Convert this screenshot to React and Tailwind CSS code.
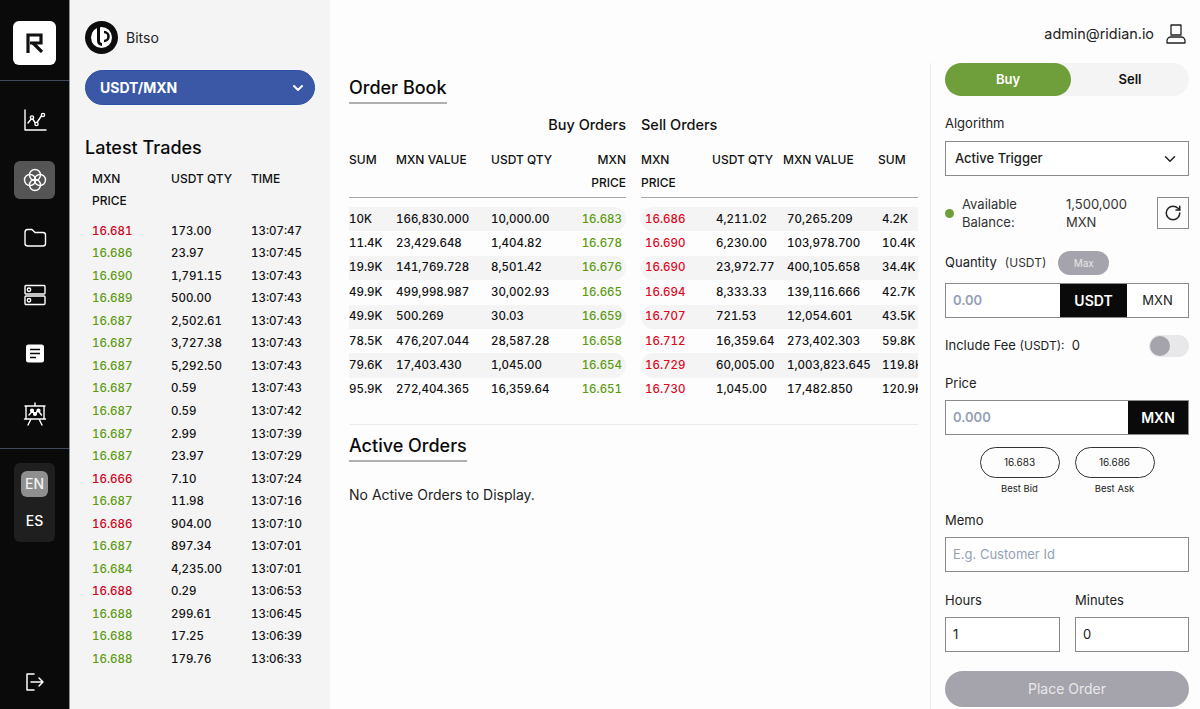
import { ChevronDown, RotateCw } from "lucide-react";

const trades = [
    ["16.681", "173.00", "13:07:47", "r"],
    ["16.686", "23.97", "13:07:45", "g"],
    ["16.690", "1,791.15", "13:07:43", "g"],
    ["16.689", "500.00", "13:07:43", "g"],
    ["16.687", "2,502.61", "13:07:43", "g"],
    ["16.687", "3,727.38", "13:07:43", "g"],
    ["16.687", "5,292.50", "13:07:43", "g"],
    ["16.687", "0.59", "13:07:43", "g"],
    ["16.687", "0.59", "13:07:42", "g"],
    ["16.687", "2.99", "13:07:39", "g"],
    ["16.687", "23.97", "13:07:29", "g"],
    ["16.666", "7.10", "13:07:24", "r"],
    ["16.687", "11.98", "13:07:16", "g"],
    ["16.686", "904.00", "13:07:10", "r"],
    ["16.687", "897.34", "13:07:01", "g"],
    ["16.684", "4,235.00", "13:07:01", "g"],
    ["16.688", "0.29", "13:06:53", "r"],
    ["16.688", "299.61", "13:06:45", "g"],
    ["16.688", "17.25", "13:06:39", "g"],
    ["16.688", "179.76", "13:06:33", "g"],
];

const buys = [
    ["10K", "166,830.000", "10,000.00", "16.683"],
    ["11.4K", "23,429.648", "1,404.82", "16.678"],
    ["19.9K", "141,769.728", "8,501.42", "16.676"],
    ["49.9K", "499,998.987", "30,002.93", "16.665"],
    ["49.9K", "500.269", "30.03", "16.659"],
    ["78.5K", "476,207.044", "28,587.28", "16.658"],
    ["79.6K", "17,403.430", "1,045.00", "16.654"],
    ["95.9K", "272,404.365", "16,359.64", "16.651"],
];

const sells = [
    ["16.686", "4,211.02", "70,265.209", "4.2K"],
    ["16.690", "6,230.00", "103,978.700", "10.4K"],
    ["16.690", "23,972.77", "400,105.658", "34.4K"],
    ["16.694", "8,333.33", "139,116.666", "42.7K"],
    ["16.707", "721.53", "12,054.601", "43.5K"],
    ["16.712", "16,359.64", "273,402.303", "59.8K"],
    ["16.729", "60,005.00", "1,003,823.645", "119.8K"],
    ["16.730", "1,045.00", "17,482.850", "120.9K"],
];

function NavIcon({ children }) {
    return (
        <svg width="24" height="24" viewBox="0 0 24 24" fill="none" stroke="white" strokeWidth="1.4" strokeLinecap="round" strokeLinejoin="round">
            {children}
        </svg>
    );
}

function Sidebar() {
    return (
        <aside className="w-[70px] shrink-0 h-full bg-[#0a0a0a] border-r border-[#8b8f96] flex flex-col">
            <div className="h-[81px] shrink-0 border-b border-[#3f4a5c] pt-[21px] pl-[13px]">
                <div className="w-[43px] h-[44px] bg-white rounded-md flex items-center justify-center">
                    <svg width="18" height="20" viewBox="0 0 18 20" fill="none" stroke="#111" strokeWidth="3.2">
                        <path d="M2 20V2h13v8H4" />
                        <path d="M7 10l9 9" />
                    </svg>
                </div>
            </div>
            <div className="h-[368px] shrink-0 border-b border-[#3f4a5c] flex flex-col items-center pt-[28px]">
                <div className="h-[24px] flex items-center">
                    <NavIcon>
                        <path d="M2 1v20h21" />
                        <path d="M5 14l4-5 4 6 6-9" />
                        <circle cx="9" cy="8.5" r="1.6" fill="#0a0a0a" />
                        <circle cx="13.5" cy="15" r="1.6" fill="#0a0a0a" />
                        <circle cx="20" cy="6" r="1.6" fill="#0a0a0a" />
                    </NavIcon>
                </div>
                <div className="mt-[28px] w-[41px] h-[38px] bg-[#555555] rounded-md flex items-center justify-center">
                    <NavIcon>
                        <circle cx="7" cy="12" r="5.5" />
                        <circle cx="17" cy="12" r="5.5" />
                        <circle cx="12" cy="7" r="5.5" />
                        <circle cx="12" cy="17" r="5.5" />
                    </NavIcon>
                </div>
                <div className="mt-[27px] h-[24px] flex items-center">
                    <NavIcon>
                        <path d="M2 6.5C2 4.5 3 3.5 4.5 3.5h4.5l3 3h8c1.500 0 2.500 1 2.500 2.500v8.500c0 1.500-1 2.500-2.500 2.500h-15C3 20 2 19 2 17.500z" />
                    </NavIcon>
                </div>
                <div className="mt-[33px] h-[24px] flex items-center">
                    <NavIcon>
                        <rect x="2" y="2.500" width="20" height="8.500" rx="1" />
                        <rect x="2" y="13" width="20" height="8.500" rx="1" />
                        <circle cx="6" cy="6.750" r="1.700" />
                        <circle cx="6" cy="17.250" r="1.700" />
                    </NavIcon>
                </div>
                <div className="mt-[35px] h-[24px] flex items-center">
                    <svg width="24" height="24" viewBox="0 0 24 24">
                        <rect x="3" y="2.500" width="18" height="18" rx="2.500" fill="white" />
                        <path d="M7 7.500h10M7 11.500h10M7 15.500h6" stroke="#0a0a0a" strokeWidth="1.500" />
                    </svg>
                </div>
                <div className="mt-[36px] h-[24px] flex items-center">
                    <NavIcon>
                        <path d="M12 1v3M2 4h20M3 4v13h18V4M1.500 17h21M8 17l-3 6M16 17l3 6" />
                        <path d="M6 13l3.500-4 2.500 3 3-3.500 3.500 4.500" />
                        <circle cx="9" cy="8.500" r="1.400" fill="white" />
                        <circle cx="12" cy="12" r="1.400" fill="white" />
                        <circle cx="15.500" cy="8.500" r="1.400" fill="white" />
                    </NavIcon>
                </div>
            </div>
            <div className="mt-[14px] ml-[14px] w-[41px] h-[79px] bg-[#1f1f1f] rounded-md flex flex-col items-center pt-[8px] font-medium text-sm text-white">
                <div className="w-[27px] h-[26px] bg-[#8f8f8f] rounded-md flex items-center justify-center text-[#f2f2f2]">EN</div>
                <div className="mt-[11px] leading-[26px]">ES</div>
            </div>
            <div className="mt-auto pb-[17px] flex justify-center">
                <svg width="20" height="20" viewBox="0 0 20 20" fill="none" stroke="white" strokeWidth="1.500" strokeLinecap="round" strokeLinejoin="round">
                    <path d="M9 2H2v16h7" />
                    <path d="M6 10h12M14 6l4 4-4 4" />
                </svg>
            </div>
        </aside>
    );
}

function TradesPanel() {
    return (
        <section className="w-[260px] shrink-0 h-full bg-[#f4f4f5] pl-[15px] pr-[15px] pt-[21px]">
            <div className="flex items-center gap-[8px] h-[33px]">
                <svg width="33" height="33" viewBox="0 0 33 33">
                    <circle cx="16.500" cy="16.500" r="16.500" fill="#0d0d0d" />
                    <circle cx="16.500" cy="16.500" r="10.500" fill="white" />
                    <path d="M13.500 5v15a3.500 3.500 0 0 0 3.500 3.500" fill="none" stroke="#0d0d0d" strokeWidth="3" />
                    <path d="M19 11a4.500 4.500 0 0 1 0 9" fill="none" stroke="#0d0d0d" strokeWidth="2.600" />
                </svg>
                <span className="text-sm text-[#222222]">Bitso</span>
            </div>
            <div className="mt-[16px] h-[35px] rounded-full bg-[#3a58a6] border border-[#2c51a8] flex items-center justify-between pl-[14px] pr-[8px] text-white text-sm font-bold">
                USDT/MXN
                <ChevronDown size={16} strokeWidth={3} />
            </div>
            <h2 className="mt-[31px] text-lg font-medium leading-[24px] text-[#0a0a0a]">Latest Trades</h2>
            <div className="mt-[7.500px] grid grid-cols-[79px_80px_1fr] pl-[7px] text-xs font-medium text-[#111111] leading-[22.500px]">
                <div className="w-[50px]">MXN PRICE</div>
                <div>USDT QTY</div>
                <div>TIME</div>
            </div>
            <div className="mt-[7.500px] pl-[7px]">
                {trades.map((t, i) => (
                    <div key={i} className="grid grid-cols-[79px_80px_1fr] h-[22.550px] items-center text-[11.500px] tabular-nums font-medium text-[#111111]">
                        <span className={t[3] === "r" ? "text-[#d0021b]" : "text-[#5c9a0f]"}>{t[0]}</span>
                        <span>{t[1]}</span>
                        <span>{t[2]}</span>
                    </div>
                ))}
            </div>
        </section>
    );
}

function SectionTitle({ children }) {
    return (
        <h2 className="inline-block text-lg font-medium leading-[24px] pb-[2px] border-b-2 border-[#b0b0b0] text-[#0a0a0a]">{children}</h2>
    );
}

function BuyTable() {
    return (
        <div className="w-[277px] shrink-0">
            <div className="text-right text-[14.500px] font-medium leading-[20px] text-[#111111]">Buy Orders</div>
            <div className="mt-[14px] pb-[3px] border-b border-[#a8a8a8] grid grid-cols-[47px_95px_75px_60px] text-xs font-medium leading-[22.500px] text-[#111111]">
                <div>SUM</div>
                <div>MXN VALUE</div>
                <div>USDT QTY</div>
                <div className="text-right">MXN PRICE</div>
            </div>
            <div className="mt-[9px]">
                {buys.map((r, i) => (
                    <div key={i} className={`grid grid-cols-[47px_95px_75px_60px] h-[24.400px] items-center text-[11.500px] tabular-nums font-medium text-[#111111] rounded-r-full ${i % 2 === 0 ? "bg-[#f4f4f5]" : ""}`}>
                        <span>{r[0]}</span>
                        <span>{r[1]}</span>
                        <span>{r[2]}</span>
                        <span className="text-right pr-[4px] text-[#5c9a0f]">{r[3]}</span>
                    </div>
                ))}
            </div>
        </div>
    );
}

function SellTable() {
    return (
        <div className="w-[277px] shrink-0 overflow-hidden">
            <div className="text-[14.500px] font-medium leading-[20px] text-[#111111]">Sell Orders</div>
            <div className="mt-[14px] pb-[3px] border-b border-[#a8a8a8] grid grid-cols-[71px_71px_95px_40px] text-xs font-medium leading-[22.500px] text-[#111111]">
                <div className="w-[40px]">MXN PRICE</div>
                <div>USDT QTY</div>
                <div>MXN VALUE</div>
                <div>SUM</div>
            </div>
            <div className="mt-[9px]">
                {sells.map((r, i) => (
                    <div key={i} className={`grid grid-cols-[71px_71px_95px_40px] h-[24.400px] items-center text-[11.500px] tabular-nums font-medium text-[#111111] whitespace-nowrap rounded-l-full ${i % 2 === 0 ? "bg-[#f4f4f5]" : ""}`}>
                        <span className="pl-[4px] text-[#e0061c]">{r[0]}</span>
                        <span className="pl-[4px]">{r[1]}</span>
                        <span className="pl-[4px]">{r[2]}</span>
                        <span className="pl-[4px]">{r[3]}</span>
                    </div>
                ))}
            </div>
        </div>
    );
}

function OrderForm() {
    const box = "h-[35px] border border-[#8a8a8a] bg-white";
    return (
        <section className="w-[270px] shrink-0 h-full border-l border-[#ececec] pl-[14px] pr-[11px] text-[#222222] text-[13px]">
            <div className="h-[33px] rounded-full bg-[#f4f4f5] flex text-[13px] font-semibold">
                <div className="w-[126px] rounded-full bg-[#6f9f3a] text-white flex items-center justify-center">Buy</div>
                <div className="flex-1 flex items-center justify-center text-[#111111]">Sell</div>
            </div>
            <div className="mt-[18px] leading-[18px]">Algorithm</div>
            <div className={`mt-[9px] ${box} flex items-center justify-between pl-[9px] pr-[9px] font-medium`}>
                Active Trigger
                <ChevronDown size={18} strokeWidth={2} />
            </div>
            <div className="mt-[20px] h-[33px] flex items-center">
                <div className="w-[9px] h-[9px] rounded-full bg-[#6f9f3a] shrink-0 mt-[2px]" />
                <div className="w-[104px] ml-[8px] leading-[18px] text-[#333333]">Available Balance:</div>
                <div className="w-[91px] leading-[18px] text-[#333333]">1,500,000 MXN</div>
                <div className="w-[32px] h-[32px] border border-[#8a8a8a] flex items-center justify-center">
                    <RotateCw size={18} strokeWidth={2} />
                </div>
            </div>
            <div className="mt-[22px] h-[24px] flex items-center">
                <span>Quantity</span>
                <span className="ml-[8px] text-xs text-[#333333]">(USDT)</span>
                <span className="ml-[12px] w-[51px] h-[24px] rounded-full bg-[#a5a3ac] text-[#e8e8ea] text-[10px] flex items-center justify-center">Max</span>
            </div>
            <div className={`mt-[8px] ${box} flex`}>
                <div className="w-[114px] pl-[7px] flex items-center text-[13px] font-semibold text-[#94a0b5]">0.00</div>
                <div className="w-[67px] bg-[#0a0a0a] text-white text-sm font-semibold flex items-center justify-center">USDT</div>
                <div className="flex-1 flex items-center justify-center">MXN</div>
            </div>
            <div className="mt-[17px] h-[22px] flex items-center justify-between">
                <span>Include Fee <span className="text-xs">(USDT):</span>&nbsp; 0</span>
                <span className="w-[40px] h-[22px] rounded-full bg-[#e8e8ea] flex items-center">
                    <span className="w-[20px] h-[20px] rounded-full bg-[#a5a3ac] ml-[1px]" />
                </span>
            </div>
            <div className="mt-[17px] leading-[18px]">Price</div>
            <div className={`mt-[8px] ${box} flex`}>
                <div className="flex-1 pl-[7px] flex items-center text-[13px] font-semibold text-[#94a0b5]">0.000</div>
                <div className="w-[60px] bg-[#0a0a0a] text-white text-sm font-semibold flex items-center justify-center">MXN</div>
            </div>
            <div className="mt-[12px] flex justify-center gap-[15px]">
                <div className="w-[80px] flex flex-col items-center">
                    <div className="w-full h-[31px] border border-[#333333] rounded-full flex items-center justify-center text-[10px]">16.683</div>
                    <div className="mt-[5px] text-[9.500px] leading-[12px]">Best Bid</div>
                </div>
                <div className="w-[80px] flex flex-col items-center">
                    <div className="w-full h-[31px] border border-[#333333] rounded-full flex items-center justify-center text-[10px]">16.686</div>
                    <div className="mt-[5px] text-[9.500px] leading-[12px]">Best Ask</div>
                </div>
            </div>
            <div className="mt-[16px] leading-[18px]">Memo</div>
            <div className={`mt-[8px] ${box} flex items-center pl-[7px] text-[#94a0b5]`}>E.g. Customer Id</div>
            <div className="mt-[19px] grid grid-cols-[115px_114px] gap-x-[15px]">
                <div>
                    <div className="leading-[18px]">Hours</div>
                    <div className={`mt-[8px] ${box} flex items-center pl-[7px]`}>1</div>
                </div>
                <div>
                    <div className="leading-[18px]">Minutes</div>
                    <div className={`mt-[8px] ${box} flex items-center pl-[7px]`}>0</div>
                </div>
            </div>
            <div className="mt-[19px] h-[36px] rounded-full bg-[#a5a3ac] text-[#e8e8ea] text-sm flex items-center justify-center">Place Order</div>
        </section>
    );
}

export default function App() {
    return (
        <div className="w-[1200px] h-[709px] flex overflow-hidden bg-[#fdfdfd] font-['Inter',sans-serif]">
            <Sidebar />
            <TradesPanel />
            <div className="flex-1 min-w-0 flex flex-col">
                <header className="h-[63px] shrink-0 flex items-center justify-end pr-[14px] gap-[12px] pt-[5px] text-[14.400px] text-[#222222]">
                    admin@ridian.io
                    <svg width="20" height="20" viewBox="0 0 20 20" fill="none" stroke="#222" strokeWidth="1.300" strokeLinecap="round" strokeLinejoin="round">
                        <rect x="5" y="1" width="10" height="10" />
                        <path d="M1 19v-2c0-2.500 2-4 4-4h10c2 0 4 1.500 4 4v2z" />
                    </svg>
                </header>
                <div className="flex-1 min-h-0 flex">
                    <main className="w-[600px] shrink-0 pl-[19px] pr-[12px] pt-[13px]">
                        <SectionTitle>Order Book</SectionTitle>
                        <div className="mt-[11px] flex gap-[15px]">
                            <BuyTable />
                            <SellTable />
                        </div>
                        <div className="mt-[22px] border-t border-[#ececec] pt-[9px]">
                            <SectionTitle>Active Orders</SectionTitle>
                            <p className="mt-[23px] text-sm leading-[20px] text-[#222222]">No Active Orders to Display.</p>
                        </div>
                    </main>
                    <OrderForm />
                </div>
            </div>
        </div>
    );
}
